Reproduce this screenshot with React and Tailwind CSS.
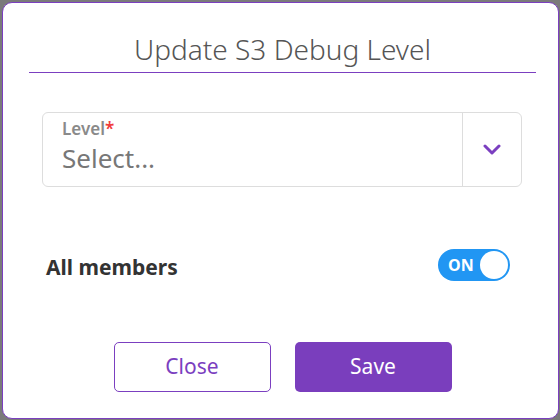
import React from "react";

export default function App() {
  const font = { fontFamily: '"Noto Sans", "Open Sans", sans-serif' };
  return (
    <div className="w-[560px] h-[420px] bg-[#7a7a7a] pl-[2px] pt-[2px] overflow-hidden" style={font}>
      <div className="w-[557px] h-[417px] bg-white border border-[#7b3fc0] rounded-[10px] flex flex-col">
        <div className="ml-[26px] mr-[22px] mt-[27px] pb-[4px] text-center">
          <h1 className="text-[28px] leading-[38px] font-light text-[#555555]">Update S3 Debug Level</h1>
        </div>
        <div className="ml-[26px] mr-[22px] h-[1px] bg-[#7b3fc0]" />

        <div className="ml-[39px] mt-[39px] w-[480px] h-[75px] border border-[#dddddd] rounded-[6px] flex">
          <div className="flex-1 pl-[19px] pt-[5px] flex flex-col">
            <div className="text-[17px] leading-[22px] font-semibold text-[#8a8a8a]">
              Level<span className="text-[#f03c3c]">*</span>
            </div>
            <div className="text-[26px] leading-[32px] text-[#777777] mt-[2px]">Select...</div>
          </div>
          <div className="w-[59px] border-l border-[#dddddd] flex items-center justify-center">
            <svg width="18" height="12" viewBox="0 0 18 12">
              <polyline points="2,2 9,9 16,2" fill="none" stroke="#7b3fc0" strokeWidth="3" strokeLinecap="round" strokeLinejoin="round" />
            </svg>
          </div>
        </div>

        <div className="ml-[43px] mr-[48px] mt-[62px] h-[32px] flex items-center justify-between">
          <span className="text-[21px] leading-[28px] font-bold text-[#333333] pt-[4px]">All members</span>
          <div className="w-[72px] h-[32px] rounded-full bg-[#2196f3] flex items-center justify-between pl-[10px] pr-[2px]">
            <span className="text-[16px] font-bold text-white">ON</span>
            <span className="w-[28px] h-[28px] rounded-full bg-white" />
          </div>
        </div>

        <div className="mt-[61px] pl-[4px] flex justify-center gap-[24px]">
          <button className="w-[157px] h-[50px] rounded-[5px] border border-[#7b3fc0] bg-white text-[21px] text-[#7b3fc0]">Close</button>
          <button className="w-[157px] h-[50px] rounded-[5px] bg-[#7a3ebd] text-[21px] text-white">Save</button>
        </div>
      </div>
    </div>
  );
}
